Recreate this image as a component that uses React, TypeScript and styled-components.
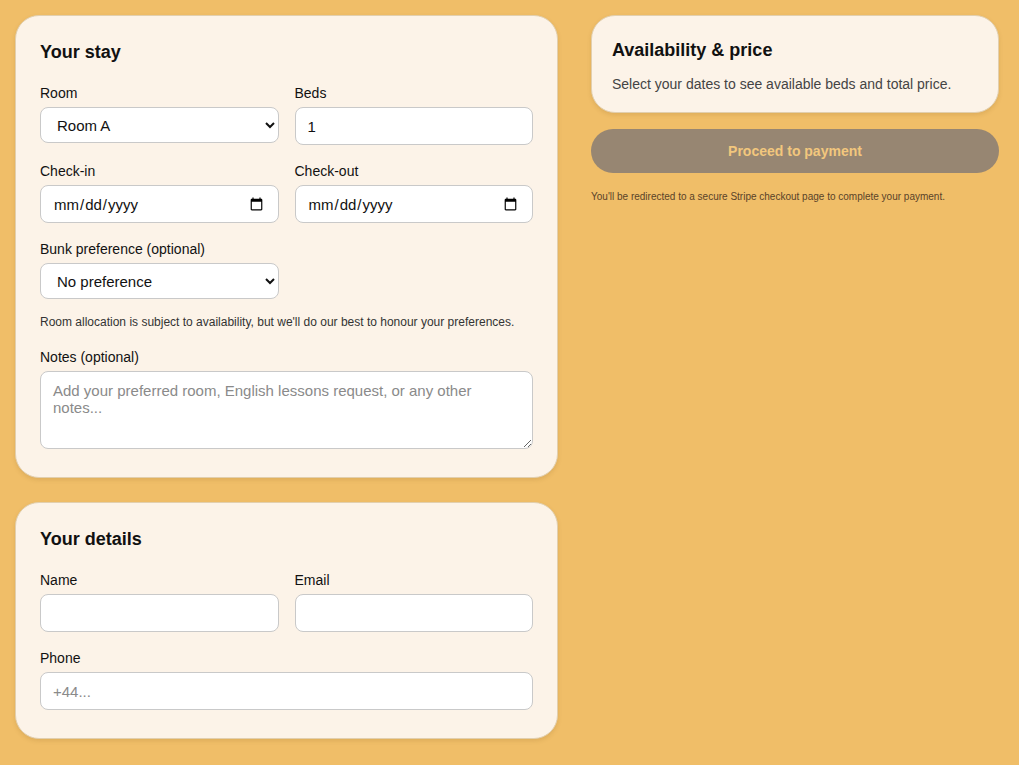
import React from "react";
import styled, { createGlobalStyle } from "styled-components";

const Global = createGlobalStyle`
  html, body { margin: 0; background: #f0be68; }
  body { font-family: "Liberation Sans", Arial, sans-serif; color: #111; }
  * { box-sizing: border-box; }
`;

const Page = styled.div`
  display: grid;
  grid-template-columns: 543px 408px;
  column-gap: 33px;
  padding: 15px 20px 28px 15px;
  align-items: start;
`;

const Column = styled.div`
  display: flex;
  flex-direction: column;
  gap: 24px;
`;

const Card = styled.section<{ $pad?: string }>`
  background: #fcf3e8;
  border: 1px solid #e2cfae;
  border-radius: 24px;
  box-shadow: 0 2px 4px rgba(120, 80, 20, 0.15);
  padding: ${(p) => p.$pad || "24px 24px 28px"};
  display: flex;
  flex-direction: column;
`;

const Title = styled.h2<{ $mb?: number }>`
  margin: 0 0 ${(p) => p.$mb ?? 21}px;
  font-size: 18px;
  font-weight: 700;
  line-height: 24px;
`;

const Row = styled.div<{ $cols?: number }>`
  display: grid;
  grid-template-columns: ${(p) => (p.$cols === 1 ? "1fr" : "1fr 1fr")};
  column-gap: 16px;
  margin-bottom: 18px;
`;

const Field = styled.label`
  display: flex;
  flex-direction: column;
  font-size: 14px;
  line-height: 16px;
  gap: 6px;
`;

const inputBase = `
  height: 38px;
  border: 1px solid #c9c9c9;
  border-radius: 8px;
  background: #fff;
  font-family: "Liberation Sans", Arial, sans-serif;
  font-size: 15px;
  color: #111;
  padding: 0 12px;
  width: 100%;
`;

const Input = styled.input`
  ${inputBase}
  &::placeholder { color: #8a8a8a; }
`;

const Select = styled.select`
  ${inputBase}
  height: 36px;
  padding: 0 12px;
`;

const TextArea = styled.textarea`
  ${inputBase}
  height: 78px;
  padding: 10px 12px;
  resize: vertical;
  &::placeholder { color: #8a8a8a; }
`;

const Note = styled.p`
  margin: -2px 0 20px;
  font-size: 12px;
  color: #333;
`;

const Muted = styled.p`
  margin: 0;
  font-size: 14px;
  color: #444;
`;

const PayButton = styled.button`
  margin-top: 16px;
  height: 44px;
  border: none;
  border-radius: 22px;
  background: #978672;
  color: #f2c77d;
  font-family: "Liberation Sans", Arial, sans-serif;
  font-size: 14px;
  font-weight: 700;
`;

const Fine = styled.p`
  margin: 18px 0 0;
  font-size: 10px;
  color: #5a4328;
`;

export default function App() {
  return (
    <>
      <Global />
      <Page>
        <Column>
          <Card>
            <Title>Your stay</Title>
            <Row>
              <Field>Room<Select defaultValue="A"><option value="A">Room A</option></Select></Field>
              <Field>Beds<Input defaultValue="1" /></Field>
            </Row>
            <Row>
              <Field>Check-in<Input type="date" /></Field>
              <Field>Check-out<Input type="date" /></Field>
            </Row>
            <Row>
              <Field>Bunk preference (optional)<Select><option>No preference</option></Select></Field>
            </Row>
            <Note>Room allocation is subject to availability, but we'll do our best to honour your preferences.</Note>
            <Field>Notes (optional)<TextArea placeholder="Add your preferred room, English lessons request, or any other notes..." /></Field>
          </Card>
          <Card>
            <Title>Your details</Title>
            <Row>
              <Field>Name<Input /></Field>
              <Field>Email<Input /></Field>
            </Row>
            <Field>Phone<Input placeholder="+44..." /></Field>
          </Card>
        </Column>
        <div>
          <Card $pad="22px 20px 20px">
            <Title $mb={14}>Availability &amp; price</Title>
            <Muted>Select your dates to see available beds and total price.</Muted>
          </Card>
          <PayButton style={{ width: "100%" }} disabled>Proceed to payment</PayButton>
          <Fine>You'll be redirected to a secure Stripe checkout page to complete your payment.</Fine>
        </div>
      </Page>
    </>
  );
}
